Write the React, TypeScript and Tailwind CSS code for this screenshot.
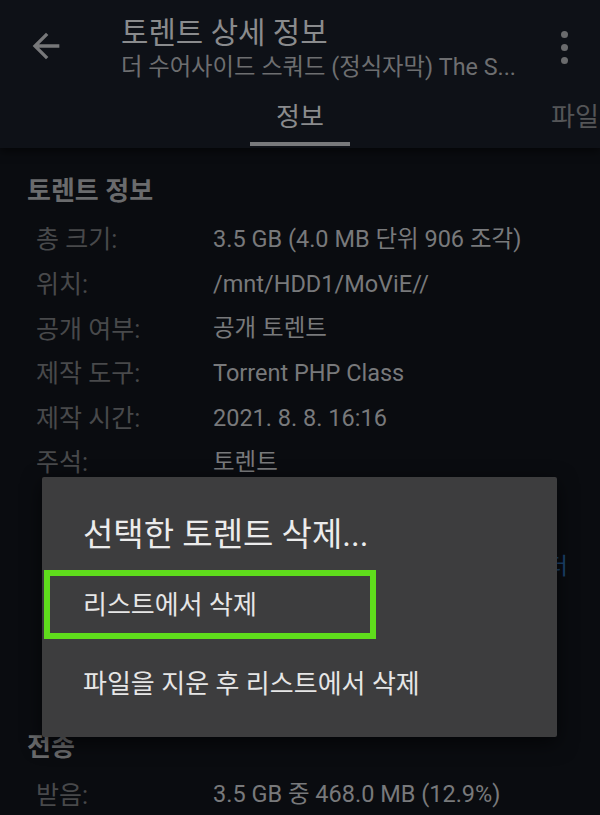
import React from 'react';

type Row = { label: string; value: string };

const infoRows: Row[] = [
  { label: '총 크기:', value: '3.5 GB (4.0 MB 단위 906 조각)' },
  { label: '위치:', value: '/mnt/HDD1/MoViE//' },
  { label: '공개 여부:', value: '공개 토렌트' },
  { label: '제작 도구:', value: 'Torrent PHP Class' },
  { label: '제작 시간:', value: '2021. 8. 8. 16:16' },
  { label: '주석:', value: '토렌트' },
];

const InfoRow = ({ row }: { row: Row }) => (
  <div className="flex items-center h-[44.6px] leading-none">
    <span className="w-[186px] pl-[9px] text-[25px] text-[#48494b]">{row.label}</span>
    <span className="text-[23.5px] text-[#78797b]">{row.value}</span>
  </div>
);

const App = () => {
  return (
    <div className="relative w-[600px] h-[815px] overflow-hidden bg-[#0a0c10] font-['Roboto','Noto_Sans_CJK_KR',sans-serif]">
      {/* app bar + tabs */}
      <div className="h-[148px] bg-[#0e1117] shadow-[0_4px_8px_rgba(0,0,0,0.5)]">
        <div className="flex h-[92px]">
          <div className="w-[121px] pl-[26px] pt-[26px]">
            <svg width="40" height="40" viewBox="0 0 24 24" fill="#77787a">
              <path d="M20 11H7.83l5.59-5.59L12 4l-8 8 8 8 1.41-1.41L7.83 13H20v-2z" />
            </svg>
          </div>
          <div className="flex-1 pt-[14px]">
            <p className="text-[29.8px] leading-[38px] text-[#8a8b8d]">토렌트 상세 정보</p>
            <p className="text-[23.3px] leading-[30px] text-[#6d6e70] whitespace-nowrap">더 수어사이드 스쿼드 (정식자막) The S...</p>
          </div>
          <div className="w-[72px] pt-[31px] pl-[33px] flex flex-col gap-[6px]">
            <span className="w-[7px] h-[7px] rounded-full bg-[#6a6b6d]" />
            <span className="w-[7px] h-[7px] rounded-full bg-[#6a6b6d]" />
            <span className="w-[7px] h-[7px] rounded-full bg-[#6a6b6d]" />
          </div>
        </div>
        <div className="flex h-[56px]">
          <div className="ml-[250px] w-[100px] pt-[3px] flex flex-col items-center">
            <span className="text-[26px] leading-[44px] text-[#8a8b8d]">정보</span>
            <span className="mt-[3px] w-[100px] h-[4px] bg-[#78797b]" />
          </div>
          <div className="ml-[201px] pt-[3px]">
            <span className="text-[26px] leading-[44px] text-[#545557] whitespace-nowrap">파일</span>
          </div>
        </div>
      </div>

      {/* body */}
      <div className="pl-[27px] pr-[30px] pt-[27px]">
        <h2 className="text-[26px] leading-[32px] font-bold text-[#6a6b6d]">토렌트 정보</h2>
        <div className="mt-[10.7px]">
          {infoRows.map((row) => (
            <InfoRow key={row.label} row={row} />
          ))}
        </div>
        <div className="h-[246px] pt-[60px] flex justify-end">
          <span className="text-[23px] leading-[44px] text-[#1c4470] pr-[2px]">폴더</span>
        </div>
        <h2 className="text-[26px] leading-[32px] font-bold text-[#6a6b6d]">전송</h2>
        <div className="mt-[9.7px]">
          <InfoRow row={{ label: '받음:', value: '3.5 GB 중 468.0 MB (12.9%)' }} />
        </div>
      </div>

      {/* delete dialog */}
      <div className="absolute left-[42px] top-[477px] w-[515px] h-[260px] bg-[#3d3d3e] rounded-[2px] shadow-[0_6px_20px_rgba(0,0,0,0.6)]">
        <p className="pl-[41px] pt-[39px] text-[33px] leading-[38px] text-[#ececec]">선택한 토렌트 삭제...</p>
        <div className="mt-[16px] ml-[2px] w-[332px] h-[69px] border-[6px] border-[#5fdc1c] flex items-center pl-[33px]">
          <span className="text-[26px] leading-none text-[#e6e6e6]">리스트에서 삭제</span>
        </div>
        <div className="mt-[10px] h-[69px] flex items-center pl-[41px]">
          <span className="text-[26px] leading-none text-[#e6e6e6]">파일을 지운 후 리스트에서 삭제</span>
        </div>
      </div>
    </div>
  );
};

export default App;
